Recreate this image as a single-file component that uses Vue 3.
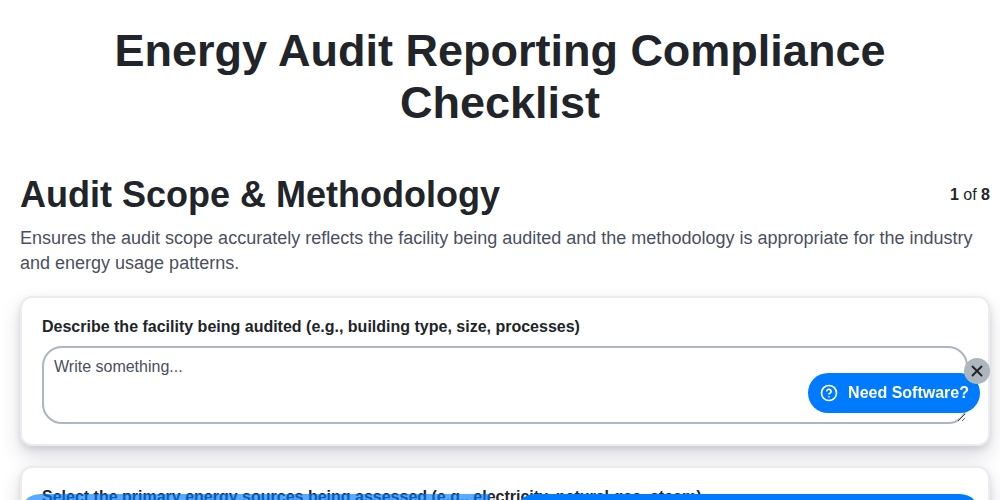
<script setup>
</script>

<template>
  <main class="page">
    <h1 class="title">Energy Audit Reporting Compliance Checklist</h1>
    <div class="content">
      <div class="section-head">
        <h2 class="section-title">Audit Scope &amp; Methodology</h2>
        <p class="count"><b>1</b> of <b>8</b></p>
      </div>
      <p class="desc">Ensures the audit scope accurately reflects the facility being audited and the methodology is appropriate for the industry and energy usage patterns.</p>
      <section class="card">
        <label class="label" for="facility">Describe the facility being audited (e.g., building type, size, processes)</label>
        <textarea id="facility" class="input" placeholder="Write something..."></textarea>
      </section>
      <section class="card">
        <label class="label">Select the primary energy sources being assessed (e.g., electricity, natural gas, steam)</label>
      </section>
    </div>
  </main>
  <div class="bar-left"></div>
  <div class="bar-right"></div>
  <div class="promo">
    <a class="pill">
      <svg class="help" viewBox="0 0 24 24" width="18" height="18" fill="none" stroke="currentColor" stroke-width="2.2" stroke-linecap="round" stroke-linejoin="round"><circle cx="12" cy="12" r="10"/><path d="M9.1 9a3 3 0 0 1 5.8 1c0 2-3 3-3 3"/><path d="M12 17h.01"/></svg>
      <span>Need Software?</span>
    </a>
    <button class="close" aria-label="Close">
      <svg viewBox="0 0 24 24" width="18" height="18" fill="none" stroke="currentColor" stroke-width="2.6" stroke-linecap="round"><path d="M6 6l12 12M18 6L6 18"/></svg>
    </button>
  </div>
</template>

<style>
html, body { margin: 0; background: #fff; overflow: hidden; }
</style>

<style scoped>
.page {
  box-sizing: border-box;
  width: 1000px;
  height: 500px;
  overflow: hidden;
  padding-top: 25px;
  font-family: "Liberation Sans", Arial, sans-serif;
  color: #212529;
}
.title {
  margin: 0 0 44px;
  padding: 0 20px;
  font-size: 45px;
  line-height: 52px;
  font-weight: 700;
  text-align: center;
}
.content { padding: 0 10px 0 20px; }
.section-head {
  display: flex;
  justify-content: space-between;
  align-items: flex-start;
}
.section-title {
  margin: 0;
  font-size: 36px;
  line-height: 44px;
  font-weight: 700;
}
.count {
  margin: 12px 0 0;
  font-size: 16px;
  line-height: 20px;
}
.desc {
  margin: 9px 0 20px;
  font-size: 18px;
  line-height: 25px;
  color: #4a5060;
}
.card {
  box-sizing: border-box;
  background: #fff;
  border: 2px solid #ebecf0;
  border-radius: 12px;
  padding: 19px 20px 20px;
  margin-bottom: 20px;
  box-shadow: 0 10px 20px rgba(50, 50, 93, 0.18), 0 3px 6px rgba(0, 0, 0, 0.1);
}
.label {
  display: block;
  font-size: 16px;
  line-height: 20px;
  font-weight: 700;
  margin-bottom: 9px;
}
.input {
  display: block;
  box-sizing: border-box;
  width: 100%;
  height: 78px;
  padding: 9px 10px;
  border: 2px solid #adb5bd;
  border-radius: 20px;
  font: 16px/20px "Liberation Sans", Arial, sans-serif;
  color: #4a5060;
  background: #fff;
}
.input::placeholder { color: #4a5060; opacity: 1; }
.bar-left {
  position: fixed;
  left: 20px;
  bottom: -30px;
  width: 470px;
  height: 36px;
  background: rgba(0, 123, 255, 0.65);
  border-radius: 20px 0 0 0;
}
.bar-right {
  position: fixed;
  left: 515px;
  right: 20px;
  bottom: -30px;
  height: 36px;
  background: #007bff;
  border-radius: 20px 20px 0 0;
}
.promo {
  position: fixed;
  right: 20px;
  top: 373px;
  font-family: "Liberation Sans", Arial, sans-serif;
}
.pill {
  display: flex;
  align-items: center;
  gap: 10px;
  height: 40px;
  box-sizing: border-box;
  padding: 0 11px 0 12px;
  border-radius: 20px;
  background: #007bff;
  color: #fff;
  font-size: 16px;
  font-weight: 700;
}
.help { display: block; }
.close {
  position: absolute;
  top: -15px;
  right: -10px;
  width: 26px;
  height: 26px;
  padding: 0;
  border: 0;
  border-radius: 50%;
  background: #adb5bd;
  color: #212529;
  display: flex;
  align-items: center;
  justify-content: center;
}
</style>
